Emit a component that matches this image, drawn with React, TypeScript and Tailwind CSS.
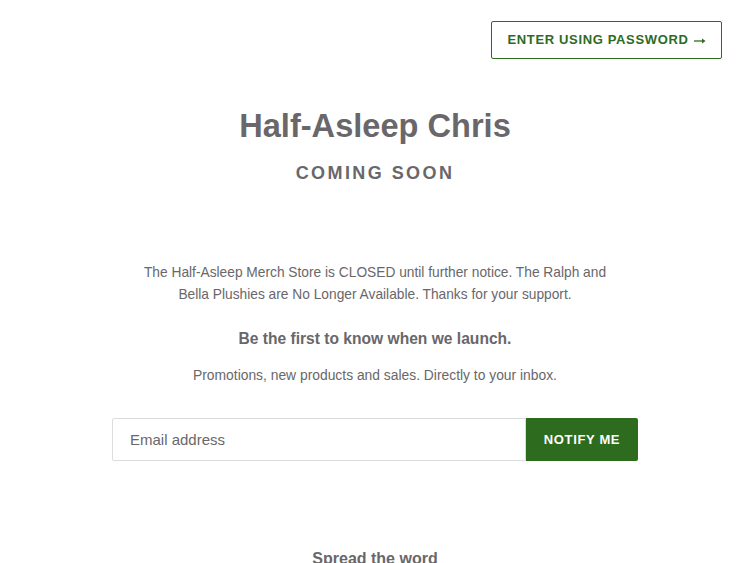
import React from "react";

export default function App() {
  return (
    <div className="min-h-[563px] bg-white text-[#69676a]" style={{ fontFamily: '"Liberation Sans", Arial, sans-serif' }}>
      <div className="flex justify-end pt-[21px] pr-[28px]">
        <button className="flex h-[38px] w-[231px] items-center justify-center gap-[5px] rounded-[2px] border border-[#2d6b1f] bg-white text-[13px] font-bold uppercase tracking-[0.05em] text-[#2d6b1f]">
          <span>Enter using password</span>
          <svg width="12" height="6" viewBox="0 0 12 6" className="mt-[1px]">
            <path d="M0 3h10" stroke="#2d6b1f" strokeWidth="1.3" />
            <path d="M8 0.5L11.5 3L8 5.5z" fill="#2d6b1f" />
          </svg>
        </button>
      </div>
      <div className="flex flex-col items-center text-center">
        <h1 className="mt-[47px] text-[32.6px] font-bold leading-[40px]">Half-Asleep Chris</h1>
        <h2 className="mt-[15px] text-[18px] font-bold uppercase leading-[24px] tracking-[0.135em]">Coming Soon</h2>
        <p className="mt-[77px] w-[480px] text-[13.75px] leading-[22px]">
          The Half-Asleep Merch Store is CLOSED until further notice. The Ralph and Bella Plushies are No Longer Available. Thanks for your support.
        </p>
        <p className="mt-[21px] text-[15.6px] font-bold leading-[24px]">Be the first to know when we launch.</p>
        <p className="mt-[13px] text-[13.85px] leading-[22px]">Promotions, new products and sales. Directly to your inbox.</p>
        <form className="mt-[32px] flex w-[526px]" onSubmit={(e) => e.preventDefault()}>
          <input
            type="email"
            placeholder="Email address"
            className="h-[43px] flex-1 rounded-l-[2px] border border-[#dcdcdc] bg-white px-[17px] text-[15px] text-[#69676a] placeholder:text-[#69676a] outline-none"
          />
          <button className="h-[43px] w-[112px] rounded-r-[2px] bg-[#2d6b1f] text-[13px] font-bold uppercase tracking-[0.05em] text-white">
            Notify Me
          </button>
        </form>
        <p className="mt-[86px] text-[16px] font-bold leading-[24px]">Spread the word</p>
      </div>
    </div>
  );
}
